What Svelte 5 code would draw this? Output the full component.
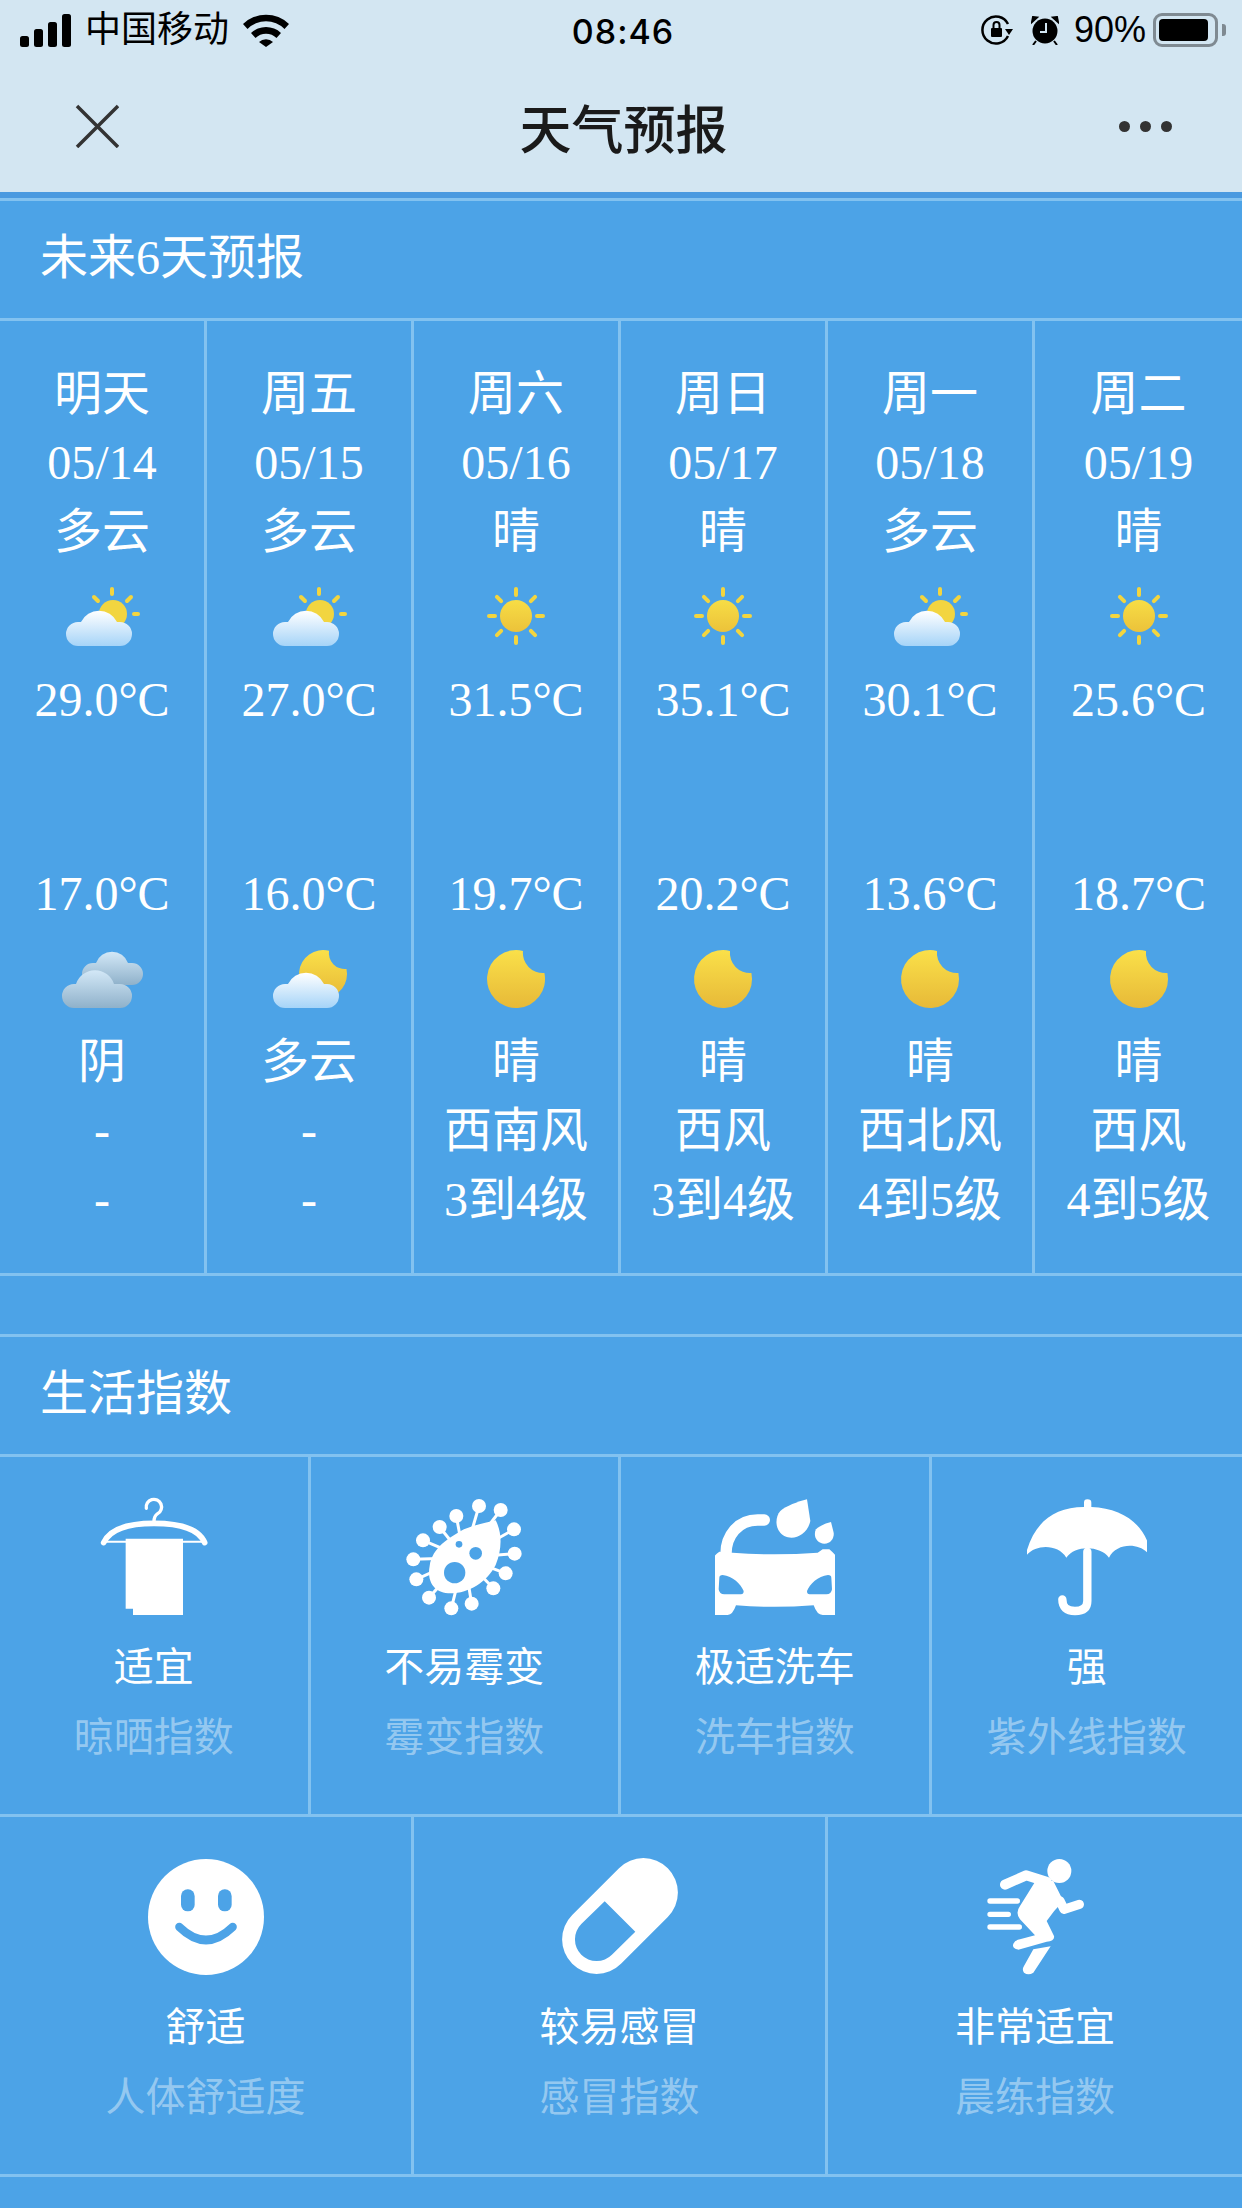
<script>
  const days = [
    { d: '明天', date: '05/14', w: '多云', hi: '29.0°C', lo: '17.0°C', top: 'partly', night: 'overcast', nw: '阴', wind: '-', lvl: '-' },
    { d: '周五', date: '05/15', w: '多云', hi: '27.0°C', lo: '16.0°C', top: 'partly', night: 'cloudmoon', nw: '多云', wind: '-', lvl: '-' },
    { d: '周六', date: '05/16', w: '晴', hi: '31.5°C', lo: '19.7°C', top: 'sun', night: 'moon', nw: '晴', wind: '西南风', lvl: '3到4级' },
    { d: '周日', date: '05/17', w: '晴', hi: '35.1°C', lo: '20.2°C', top: 'sun', night: 'moon', nw: '晴', wind: '西风', lvl: '3到4级' },
    { d: '周一', date: '05/18', w: '多云', hi: '30.1°C', lo: '13.6°C', top: 'partly', night: 'moon', nw: '晴', wind: '西北风', lvl: '4到5级' },
    { d: '周二', date: '05/19', w: '晴', hi: '25.6°C', lo: '18.7°C', top: 'sun', night: 'moon', nw: '晴', wind: '西风', lvl: '4到5级' }
  ];
  const row1 = [
    { icon: 'hanger', v: '适宜', k: '晾晒指数' },
    { icon: 'virus', v: '不易霉变', k: '霉变指数' },
    { icon: 'car', v: '极适洗车', k: '洗车指数' },
    { icon: 'umbrella', v: '强', k: '紫外线指数' }
  ];
  const row2 = [
    { icon: 'smile', v: '舒适', k: '人体舒适度' },
    { icon: 'pill', v: '较易感冒', k: '感冒指数' },
    { icon: 'run', v: '非常适宜', k: '晨练指数' }
  ];
  const knobs = [[1260,85],[1325,97],[1365,155],[1367,228],[1340,287],[1303,332],[1238,378],[1177,392],[1110,360],[1072,305],[1063,245],[1092,188],[1142,148],[1192,115]];
  const rays = [0,45,90,135,180,225,270,315];
  const boxes = { hanger: '101 58 360 360', virus: '1035 58 360 360', car: '172 58 360 360', umbrella: '1104 58 360 360', smile: '136 58 360 360', pill: '0 0 120 120', run: '105 58 360 360' };
</script>

{#snippet weather(kind)}
  <svg class="wx" viewBox="0 0 96 96" aria-hidden="true">
    {#if kind === 'sun'}
      <g stroke="#f3d53f" stroke-width="4" stroke-linecap="round">
        {#each rays as r}
          <line x1="48" y1="21" x2="48" y2="27" transform="rotate({r} 48 48)" />
        {/each}
      </g>
      <circle cx="48" cy="48" r="16" fill="url(#sunG)" />
    {:else if kind === 'moon'}
      <path transform="translate(48 49)" d="M7 -28.1A29 29 0 1 0 28.4 -6A20 20 0 0 1 7 -28.1Z" fill="url(#moonG)" />
    {:else if kind === 'partly'}
      <g stroke="#f3d53f" stroke-width="4" stroke-linecap="round">
        <line x1="58" y1="21" x2="58" y2="26" />
        <line x1="80" y1="46" x2="84" y2="46" />
        <line x1="40" y1="29" x2="44" y2="33" />
        <line x1="73" y1="33" x2="77" y2="29" />
      </g>
      <circle cx="59" cy="46" r="14" fill="#f2d540" />
      <path d="M24 78H66A12 12 0 0 0 66 54H63A20 20 0 0 0 27 54H24A12 12 0 0 0 24 78Z" fill="url(#cloudG)" />
    {:else if kind === 'cloudmoon'}
      <path transform="translate(62 44)" d="M6 -23.2A24 24 0 1 0 23.5 -5A16 16 0 0 1 6 -23.2Z" fill="url(#moonG)" />
      <path d="M24 78H66A12 12 0 0 0 66 54H63A20 20 0 0 0 27 54H24A12 12 0 0 0 24 78Z" fill="url(#cloudG)" />
    {:else}
      <path d="M39 55H78A11 11 0 0 0 78 33H74A17 17 0 0 0 42 33H39A11 11 0 0 0 39 55Z" fill="url(#greyB)" />
      <path d="M20 78H66A12 12 0 0 0 66 54H60A20 20 0 0 0 22 54H20A12 12 0 0 0 20 78Z" fill="url(#greyF)" />
    {/if}
  </svg>
{/snippet}

{#snippet life(item)}
  <div class="cell">
    <svg class="ico" viewBox={boxes[item.icon]} aria-hidden="true">
      {#if item.icon === 'hanger'}
        <path d="M258 92A23 23 0 1 1 292 108Q281 115 281 132" fill="none" stroke="#fff" stroke-width="10" stroke-linecap="round" />
        <path d="M130 195C150 152 205 137 281 137C358 137 415 152 433 195" fill="none" stroke="#fff" stroke-width="17" stroke-linecap="round" />
        <path d="M130 192H432" stroke="#fff" stroke-width="6" />
        <path d="M196 183H368V412H218V393H196Z" fill="#fff" />
      {:else if item.icon === 'virus'}
        {#each knobs as k}
          <line x1="1215" y1="240" x2={k[0]} y2={k[1]} stroke="#fff" stroke-width="9" />
          <circle cx={k[0]} cy={k[1]} r="21" fill="#fff" />
        {/each}
        <path d="M1310 128C1332 170 1327 220 1310 262C1285 312 1230 347 1175 347C1125 347 1103 310 1112 265C1120 210 1170 180 1215 155C1250 140 1285 135 1310 128Z" fill="#fff" />
        <circle cx="1187" cy="285" r="32" fill="#4ca3e7" />
        <circle cx="1250" cy="227" r="19" fill="#4ca3e7" />
        <circle cx="1200" cy="200" r="10" fill="#4ca3e7" />
      {:else if item.icon === 'car'}
        <path d="M320 127H300C240 127 205 175 205 228" fill="none" stroke="#fff" stroke-width="34" stroke-linecap="round" />
        <path d="M185 222C160 240 152 265 152 290V390Q152 412 175 412H210Q225 412 235 383Q350 392 468 383Q478 412 495 412H530Q553 412 553 390V290C553 260 540 235 515 215H495L480 225Q350 235 225 225Z" fill="#fff" />
        <path d="M185 300Q185 292 195 292C225 295 250 320 258 340Q258 350 250 350H200Q185 350 183 335Z" fill="#4ca3e7" />
        <path d="M521 300Q521 292 511 292C481 295 456 320 448 340Q448 350 456 350H506Q521 350 523 335Z" fill="#4ca3e7" />
        <path d="M448 65C420 72 385 85 368 100C350 120 352 160 380 175C410 190 450 170 458 130Z" fill="#fff" />
        <path d="M520 133C505 136 485 145 475 155C465 175 478 198 500 198C520 198 530 180 528 165Z" fill="#fff" />
      {:else if item.icon === 'umbrella'}
        <path d="M1098 240C1120 140 1180 88 1275 88V75Q1275 65 1285 65Q1297 65 1297 75V88C1400 92 1470 150 1475 240C1455 195 1375 190 1350 240C1325 205 1250 200 1222 240C1195 195 1120 200 1098 240Z" fill="#fff" />
        <path d="M1285 222V370Q1285 400 1248 400Q1210 400 1210 365" fill="none" stroke="#fff" stroke-width="25" stroke-linecap="round" />
      {:else if item.icon === 'smile'}
        <circle cx="316" cy="238" r="174" fill="#fff" />
        <rect x="241" y="155" width="41" height="66" rx="20" fill="#4ca3e7" />
        <rect x="352" y="155" width="41" height="66" rx="20" fill="#4ca3e7" />
        <path d="M236 268Q316 346 396 268" fill="none" stroke="#4ca3e7" stroke-width="25" stroke-linecap="round" />
      {:else if item.icon === 'pill'}
        <line x1="36.6" y1="82.4" x2="83.4" y2="35.6" stroke="#fff" stroke-width="69" stroke-linecap="round" />
        <path d="M44.7 44.2L21.3 67.1A21.6 21.6 0 0 0 51.9 97.7L75.3 74.8Z" fill="#4ca3e7" />
      {:else}
        <circle cx="358" cy="100" r="36" fill="#fff" />
        <path d="M195 141L258 113L320 132" fill="none" stroke="#fff" stroke-width="30" stroke-linecap="round" stroke-linejoin="round" />
        <path d="M290 125L340 130L370 190Q340 220 320 250L342 295Q345 310 320 312L235 336Q215 332 220 318Q225 308 240 305L285 293L240 245Q225 225 240 205Z" fill="#fff" />
        <path d="M360 190L372 215L418 200" fill="none" stroke="#fff" stroke-width="28" stroke-linecap="round" stroke-linejoin="round" />
        <path d="M280 335L332 326L280 405Q265 415 252 405Q245 395 252 385Z" fill="#fff" />
        <path d="M150 190H232M150 230H205M150 268H238" stroke="#fff" stroke-width="16" stroke-linecap="round" />
      {/if}
    </svg>
    <div class="val">{item.v}</div>
    <div class="key">{item.k}</div>
  </div>
{/snippet}

<svg class="defs" width="0" height="0" aria-hidden="true">
  <defs>
    <linearGradient id="cloudG" x1="0" y1="0" x2="0" y2="1"><stop offset="0" stop-color="#ffffff" /><stop offset="1" stop-color="#a6d4f8" /></linearGradient>
    <linearGradient id="sunG" x1="0" y1="0" x2="0" y2="1"><stop offset="0" stop-color="#f7dd45" /><stop offset="1" stop-color="#ecc23a" /></linearGradient>
    <linearGradient id="moonG" x1="0" y1="0" x2="0" y2="1"><stop offset="0" stop-color="#fae049" /><stop offset="1" stop-color="#e7b938" /></linearGradient>
    <linearGradient id="greyF" x1="0" y1="0" x2="0" y2="1"><stop offset="0" stop-color="#d3e8f7" /><stop offset="1" stop-color="#8fb1ca" /></linearGradient>
    <linearGradient id="greyB" x1="0" y1="0" x2="0" y2="1"><stop offset="0" stop-color="#d3e8f7" /><stop offset="1" stop-color="#8fb1ca" /></linearGradient>
  </defs>
</svg>

<div class="page">
  <header class="top">
    <div class="status">
      <div class="left">
        <svg class="signal" viewBox="0 0 51 33" aria-hidden="true">
          <rect x="0" y="22" width="9" height="11" rx="2.5" />
          <rect x="14" y="15" width="9" height="18" rx="2.5" />
          <rect x="28" y="8" width="9" height="25" rx="2.5" />
          <rect x="42" y="0" width="9" height="33" rx="2.5" />
        </svg>
        <span class="carrier">中国移动</span>
        <svg class="wifi" viewBox="0 0 46 33" aria-hidden="true">
          <path d="M0 10A33 33 0 0 1 46 10L41.500 15A26 26 0 0 0 4.500 15Z" />
          <path d="M8 19A22 22 0 0 1 38 19L33.500 24A15 15 0 0 0 12.500 24Z" />
          <path d="M16 28A10 10 0 0 1 30 28L23 33Z" />
        </svg>
      </div>
      <div class="time">08:46</div>
      <div class="right">
        <svg class="lock" viewBox="0 0 32 30" aria-hidden="true">
          <path d="M27 21A13.500 13.500 0 1 1 27 9" fill="none" stroke="#000" stroke-width="2.500" />
          <path d="M24 14H32L28 20Z" />
          <rect x="10" y="13" width="11" height="9" rx="1" />
          <path d="M12.500 13V10A3 3 0 0 1 18.500 10V13" fill="none" stroke="#000" stroke-width="2" />
        </svg>
        <svg class="alarm" viewBox="0 0 28 29" aria-hidden="true">
          <circle cx="14" cy="15" r="12.500" />
          <path d="M1 6L6 1.500L2 1ZM27 6L22 1.500L26 1ZM5 25L2 29M23 25L26 29" stroke="#000" stroke-width="2" />
          <path d="M15 7V16H9" fill="none" stroke="#d3e6f2" stroke-width="2" />
        </svg>
        <span class="pct">90%</span>
        <div class="battery"><div class="fill"></div></div>
        <div class="nub"></div>
      </div>
    </div>
    <nav class="nav">
      <svg class="close" viewBox="0 0 44 44" aria-hidden="true">
        <path d="M2 2L43 43M43 2L2 43" stroke="#333" stroke-width="3.500" />
      </svg>
      <h1>天气预报</h1>
      <div class="dots"><i></i><i></i><i></i></div>
    </nav>
  </header>

  <main class="body">
    <section class="forecast">
      <h2>未来6天预报</h2>
      <div class="table">
        {#each days as x}
          <div class="col">
            <div class="ln">{x.d}</div>
            <div class="ln">{x.date}</div>
            <div class="ln">{x.w}</div>
            <div class="wxbox">{@render weather(x.top)}</div>
            <div class="ln">{x.hi}</div>
            <div class="spacer"></div>
            <div class="ln">{x.lo}</div>
            <div class="wxbox">{@render weather(x.night)}</div>
            <div class="ln">{x.nw}</div>
            <div class="ln">{x.wind}</div>
            <div class="ln">{x.lvl}</div>
          </div>
        {/each}
      </div>
    </section>

    <section class="index">
      <h2>生活指数</h2>
      <div class="row four">
        {#each row1 as item}{@render life(item)}{/each}
      </div>
      <div class="row three">
        {#each row2 as item}{@render life(item)}{/each}
      </div>
    </section>
  </main>
</div>

<style>
  :global(body) {
    margin: 0;
    background: #4ca3e7;
  }
  .defs {
    position: absolute;
  }
  .page {
    width: 1242px;
    min-height: 2208px;
    font-family: "Liberation Serif", "Noto Sans CJK SC", serif;
    color: #fff;
    background: #4ca3e7;
    overflow: hidden;
  }
  .top {
    height: 192px;
    background: #d3e6f2;
    color: #000;
    font-family: "Liberation Sans", "Noto Sans CJK SC", sans-serif;
  }
  .status {
    height: 60px;
    display: grid;
    grid-template-columns: 1fr auto 1fr;
    align-items: center;
    padding: 0 16px 0 20px;
  }
  .left,
  .right {
    display: flex;
    align-items: center;
  }
  .right {
    justify-content: flex-end;
  }
  .signal {
    width: 51px;
    height: 33px;
    margin-right: 14px;
  }
  .carrier {
    font-size: 36px;
    line-height: 40px;
  }
  .wifi {
    width: 46px;
    height: 33px;
    margin-left: 14px;
  }
  .time {
    font-family: Inter, "Liberation Sans", sans-serif;
    font-size: 34px;
    font-weight: 500;
    letter-spacing: 1px;
    padding-top: 2px;
  }
  .lock {
    width: 32px;
    height: 30px;
    margin-right: 18px;
  }
  .alarm {
    width: 28px;
    height: 29px;
    margin-right: 15px;
  }
  .pct {
    font-size: 36px;
    line-height: 40px;
    margin-right: 7px;
  }
  .battery {
    width: 65px;
    height: 34px;
    box-sizing: border-box;
    border: 3px solid #7f8a92;
    border-radius: 9px;
    padding: 3px;
  }
  .fill {
    width: 49px;
    height: 22px;
    background: #000;
    border-radius: 4px;
  }
  .nub {
    width: 4px;
    height: 12px;
    margin-left: 4px;
    background: #7f8a92;
    border-radius: 0 3px 3px 0;
  }
  .nav {
    height: 132px;
    display: grid;
    grid-template-columns: 1fr auto 1fr;
    align-items: center;
    padding: 0 70px 6px 75px;
  }
  .close {
    width: 44px;
    height: 44px;
  }
  .nav h1 {
    margin: 0;
    font-size: 52px;
    font-weight: 500;
    color: #1a1a1a;
  }
  .dots {
    display: flex;
    justify-content: flex-end;
    gap: 10px;
  }
  .dots i {
    width: 11px;
    height: 11px;
    border-radius: 50%;
    background: #333;
  }
  .body {
    padding-top: 6px;
    border-top: 0;
    box-shadow: inset 0 6px 0 #4a9ae0;
  }
  h2 {
    margin: 0;
    height: 117px;
    box-sizing: content-box;
    padding-left: 40px;
    font-size: 48px;
    font-weight: 400;
    line-height: 114px;
    border-top: 3px solid #82c2f0;
    border-bottom: 3px solid #82c2f0;
  }
  .table {
    display: grid;
    grid-template-columns: repeat(6, 1fr);
    border-bottom: 3px solid #82c2f0;
  }
  .col {
    padding: 38px 0 39px;
    border-right: 3px solid #82c2f0;
    text-align: center;
  }
  .col:last-child {
    border-right: 0;
  }
  .ln {
    height: 69px;
    font-size: 48px;
    line-height: 69px;
    white-space: nowrap;
  }
  .wxbox {
    height: 99px;
    display: flex;
    justify-content: center;
    align-items: center;
  }
  .wx {
    width: 96px;
    height: 96px;
    display: block;
  }
  .spacer {
    height: 125px;
  }
  .index {
    margin-top: 58px;
  }
  .row {
    display: grid;
    border-bottom: 3px solid #82c2f0;
  }
  .four {
    grid-template-columns: repeat(4, 1fr);
  }
  .three {
    grid-template-columns: repeat(3, 1fr);
  }
  .cell {
    height: 357px;
    box-sizing: content-box;
    padding-top: 0;
    border-right: 3px solid #82c2f0;
    text-align: center;
  }
  .cell:last-child {
    border-right: 0;
  }
  .ico {
    display: block;
    width: 120px;
    height: 120px;
    margin: 40px auto 16px;
  }
  .val,
  .key {
    height: 70px;
    font-size: 40px;
    line-height: 70px;
    white-space: nowrap;
  }
  .key {
    color: rgba(255, 255, 255, 0.42);
  }
</style>
